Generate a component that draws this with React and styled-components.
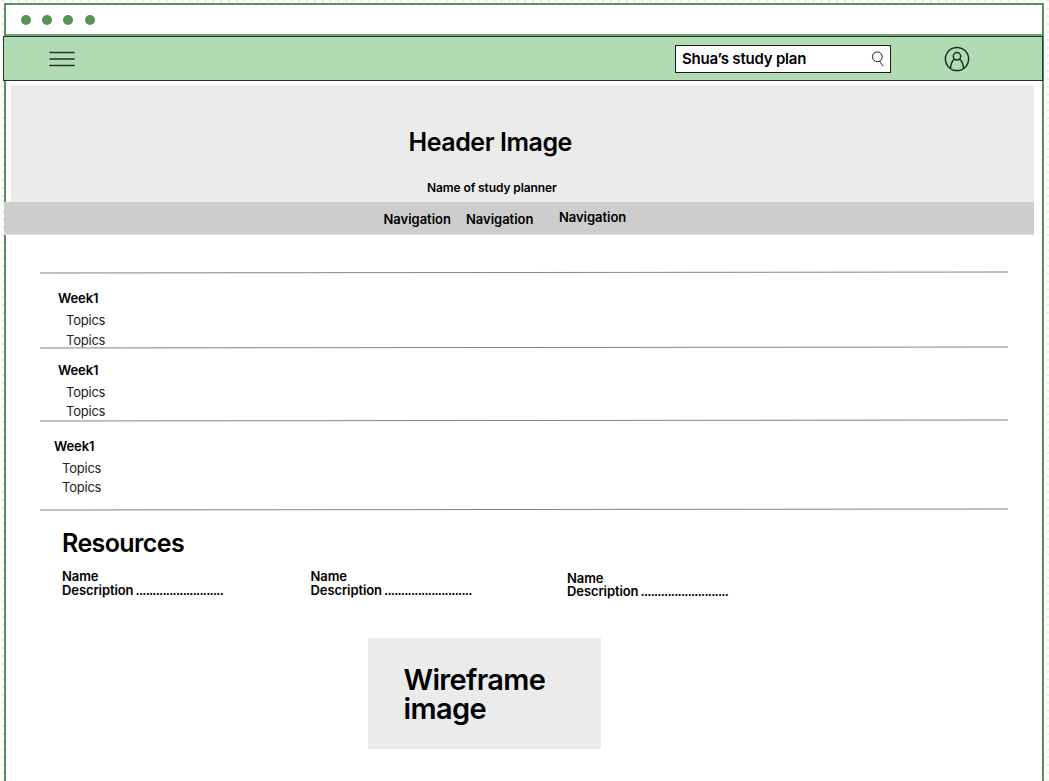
import React from "react";
import styled, { createGlobalStyle } from "styled-components";

const GlobalStyle = createGlobalStyle`
  * { box-sizing: border-box; }
  body { margin: 0; background: #fff; overflow: hidden; }
`;

const Page = styled.div`
  width: 1049px;
  height: 781px;
  padding: 3px 5px 0 4px;
  overflow: hidden;
  font-family: Inter, "Liberation Sans", sans-serif;
  font-weight: 600;
  color: #000;
  background: #fff radial-gradient(circle at 3px 1px, #e3e7e7 0.8px, transparent 1.5px) 0 0 / 7.8px 7.8px;
`;

const Frame = styled.div`
  height: 790px;
  border: 2px solid #56925a;
  background: #fff;
`;

const TitleBar = styled.div`
  display: flex;
  align-items: center;
  gap: 11.2px;
  height: 31px;
  padding: 1px 15px 0;
  border-bottom: 2px solid #6fab74;
`;

const Dot = styled.span`
  width: 10px;
  height: 10px;
  border-radius: 50%;
  background: #56925a;
`;

const AppBar = styled.header`
  display: flex;
  align-items: center;
  height: 45px;
  margin: 0 -1px 0 -3px;
  padding: 0 72px 0 45px;
  border: 1px solid #26352a;
  background: #b0dbb3;
`;

const SearchBox = styled.div`
  display: flex;
  align-items: center;
  justify-content: space-between;
  width: 216px;
  height: 28px;
  margin: 0 53px 0 auto;
  padding: 0 5px 0 6px;
  border: 1px solid #1c1c1c;
  background: #fff;
`;

const Label = styled.span`
  display: block;
  font-size: ${(p) => p.$size || 13}px;
  line-height: ${(p) => p.$line || 16}px;
  letter-spacing: ${(p) => p.$track ?? -0.1}px;
  white-space: nowrap;
`;

const Hero = styled.section`
  display: flex;
  flex-direction: column;
  height: 117px;
  margin: 4px 8px 0 4.5px;
  padding: 41px 0 0 398px;
  background: #ebebeb;
`;

const HeroCaption = styled.div`
  padding: 22px 0 0 18.5px;
`;

const Nav = styled.nav`
  display: flex;
  gap: 15px;
  height: 33px;
  margin: 0 8px 37px -2px;
  padding: 9px 0 0 379.5px;
  border-bottom: 1px solid #dedede;
  background: #cdcdcd;
`;

const NavItem = styled.a`
  width: 67.5px;
  margin-top: ${(p) => p.$lift || 0}px;
  margin-left: ${(p) => p.$push || 0}px;
`;

const Rule = styled.div`
  height: 1px;
  margin: 0 34px;
  background: #858585;
  transform: rotate(-0.06deg);
`;

const Week = styled.section`
  height: ${(p) => p.$height}px;
  padding: ${(p) => p.$top}px 0 0 ${(p) => p.$left}px;
`;

const Topic = styled.div`
  height: ${(p) => p.$height || 19}px;
  padding-left: 8px;
  font-size: 13px;
  line-height: 16px;
  font-weight: 400;
  letter-spacing: -0.22px;
  color: #222;
`;

const WeekTitle = styled.div`
  height: 22px;
`;

const Resources = styled.section`
  padding: 17px 0 0 56px;
`;

const ResourceRow = styled.div`
  display: flex;
  padding-top: 10px;
  height: 78.6px;
`;

const Resource = styled.article`
  width: ${(p) => p.$width}px;
  padding-top: ${(p) => p.$top || 0}px;
`;

const Leader = styled.span`
  margin-left: -1px;
  letter-spacing: -0.78px;
`;

const ImageCard = styled.div`
  width: 233px;
  height: 111px;
  margin-left: 362px;
  padding: 27.4px 35.5px;
  background: #ebebeb;
`;

const MenuIcon = () => (
  <svg width="26" height="18" viewBox="0 0 26 18" stroke="#253129" strokeWidth="1.4">
    <path d="M0.5 2.5h25M0.5 9h25M0.5 15.5h25" />
  </svg>
);

const SearchIcon = () => (
  <svg width="14" height="16" viewBox="0 0 14 16" fill="none" stroke="#222" strokeWidth="1">
    <circle cx="6.3" cy="5.8" r="4.9" />
    <path d="M8.8 10.2L12 15.2" />
  </svg>
);

const ProfileIcon = () => (
  <svg width="26" height="26" viewBox="0 0 26 26" fill="none" stroke="#203026" strokeWidth="1.5">
    <circle cx="13" cy="13" r="11.6" />
    <circle cx="13" cy="10.3" r="3.7" />
    <path d="M6.4 22.6C6.8 18.2 8.3 14.6 10.6 13.2M19.6 22.6C19.2 18.2 17.7 14.6 15.4 13.2" />
  </svg>
);

const weeks = [
  { height: 74, top: 17, left: 52, topic: 20 },
  { height: 72, top: 14, left: 52, topic: 19 },
  { height: 88.4, top: 17, left: 48, topic: 19 },
];

const resources = [
  { width: 248.5, top: 0, line: 14 },
  { width: 256.5, top: 0, line: 14 },
  { width: 200, top: 2.6, line: 13 },
];

export default function App() {
  return (
    <Page>
      <GlobalStyle />
      <Frame>
        <TitleBar>
          <Dot /><Dot /><Dot /><Dot />
        </TitleBar>
        <AppBar>
          <MenuIcon />
          <SearchBox>
            <Label $size={15} $track={-0.2}>Shua’s study plan</Label>
            <SearchIcon />
          </SearchBox>
          <ProfileIcon />
        </AppBar>
        <Hero>
          <Label $size={25} $line={32} $track={-0.45}>Header Image</Label>
          <HeroCaption>
            <Label $size={12} $track={-0.1}>Name of study planner</Label>
          </HeroCaption>
        </Hero>
        <Nav>
          <NavItem><Label $track={-0.03}>Navigation</Label></NavItem>
          <NavItem><Label $track={-0.03}>Navigation</Label></NavItem>
          <NavItem $lift={-2} $push={10.4}><Label $track={-0.03}>Navigation</Label></NavItem>
        </Nav>
        {weeks.map((w, i) => (
          <React.Fragment key={i}>
            <Rule />
            <Week $height={w.height} $top={w.top} $left={w.left}>
              <WeekTitle><Label>Week1</Label></WeekTitle>
              <Topic $height={w.topic}>Topics</Topic>
              <Topic>Topics</Topic>
            </Week>
          </React.Fragment>
        ))}
        <Rule />
        <Resources>
          <Label $size={25} $line={32} $track={-0.6}>Resources</Label>
          <ResourceRow>
            {resources.map((r, i) => (
              <Resource key={i} $width={r.width} $top={r.top}>
                <Label $line={r.line}>Name</Label>
                <Label $line={r.line}>Description <Leader>..........................</Leader></Label>
              </Resource>
            ))}
          </ResourceRow>
        </Resources>
        <ImageCard>
          <Label $size={29} $line={29} $track={-0.65}>Wireframe<br />image</Label>
        </ImageCard>
      </Frame>
    </Page>
  );
}
